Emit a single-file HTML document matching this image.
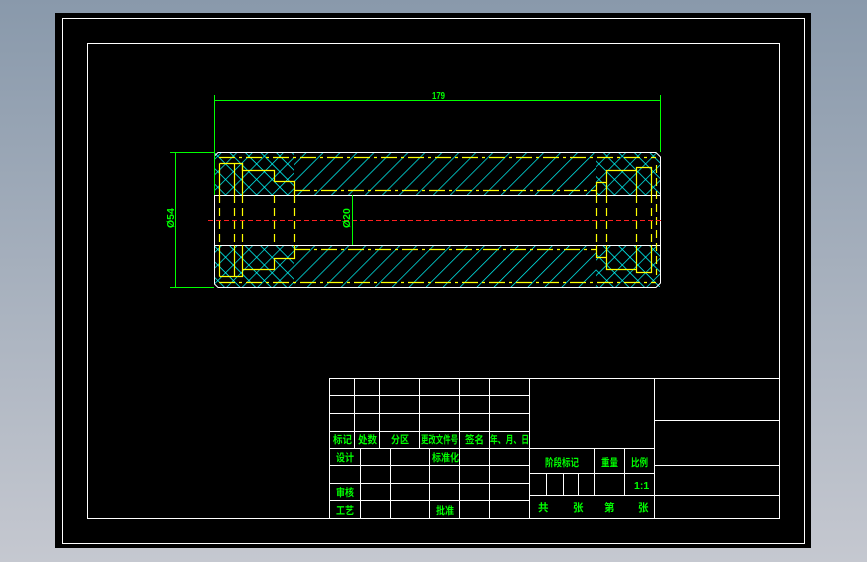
<!DOCTYPE html>
<html><head><meta charset="utf-8"><style>
html,body{margin:0;padding:0}
body{width:867px;height:562px;overflow:hidden;background:linear-gradient(#8999ab,#c5c8d0);font-family:"Liberation Sans","Noto Sans CJK SC",sans-serif}
svg{position:absolute;left:0;top:0}
text{fill:#00ff00;font-family:"Liberation Sans","Noto Sans CJK SC",sans-serif;font-size:10.5px;font-weight:bold}
</style></head><body>
<svg width="867" height="562" viewBox="0 0 867 562">
<defs>
<pattern id="d" width="12" height="12" patternUnits="userSpaceOnUse" patternTransform="rotate(45)"><line x1="0" y1="0" x2="0" y2="12" stroke="#00ffff" stroke-width="1.4"/></pattern>
<pattern id="c" width="11" height="11" patternUnits="userSpaceOnUse" patternTransform="rotate(45)"><path d="M0 0V11M0 0H11" stroke="#00ffff" stroke-width="1.4" fill="none"/></pattern>
</defs>
<rect x="55" y="13" width="756" height="535" fill="#000"/>
<rect x="62.5" y="18.5" width="742" height="525" fill="none" stroke="#fff"/>
<rect x="87.5" y="43.5" width="692" height="475" fill="none" stroke="#fff"/>
<rect x="294" y="153" width="302" height="42" fill="url(#d)"/>
<rect x="294" y="245" width="302" height="42" fill="url(#d)"/>
<rect x="215" y="153" width="79" height="42" fill="url(#c)"/>
<rect x="215" y="245" width="79" height="42" fill="url(#c)"/>
<rect x="596" y="153" width="64" height="42" fill="url(#c)"/>
<rect x="596" y="245" width="64" height="42" fill="url(#c)"/>
<path d="M218 152.5H656L660.5 157V283L656 287.5H218L214.5 284V156Z" fill="none" stroke="#fff"/>
<path d="M214.5 195.5H660.5M214.5 245.5H660.5" stroke="#fff"/>
<g stroke="#ffff00" fill="none" stroke-width="1.2">
<path d="M219.5 163.5H242.5V170.5H274.5V181.5H294.5V195M219.5 163.5V195M234.5 163.5V195"/>
<path d="M219.5 276.5H242.5V269.5H274.5V258.5H294.5V245M219.5 276.5V245M234.5 276.5V245M242.5 163.5V195M242.5 245V276.5"/>
<path d="M294 190.5H596M294 249.5H596M219 157.5H656M219 282.5H656" stroke-dasharray="16 4 3 4"/>
<path d="M219.5 195V245M234.5 195V245M242.5 195V245M274.5 195V245M294.5 195V245M596.5 195V245M606.5 195V245M636.5 195V245M651.5 195V245M656.5 165V275" stroke-dasharray="8 5"/>
<path d="M596.5 195V182.5H606.5V170.5H636.5V167.5H651.5V195M606.5 170.5V195M636.5 167.5V195"/>
<path d="M596.5 245V257.5H606.5V269.5H636.5V272.5H651.5V245M606.5 269.5V245M636.5 272.5V245"/>
</g>
<line x1="208" y1="220.5" x2="664" y2="220.5" stroke="#ff2020" stroke-dasharray="5 3"/>
<g stroke="#00ff00" fill="none">
<path d="M214.5 95V195M660.5 95V152M214.5 100.5H660.5"/>
<path d="M170 152.5H214M170 287.5H214M175.5 152V287"/>
<path d="M352.5 195V245"/>
</g>
<text x="432" y="99" font-size="9" textLength="13" lengthAdjust="spacingAndGlyphs">179</text>
<text transform="translate(174,228) rotate(-90)" font-size="9">Ø54</text>
<text transform="translate(350,228) rotate(-90)" font-size="9">Ø20</text>
<g stroke="#fff" fill="none">
<rect x="329.5" y="378.5" width="450" height="140"/>
<path d="M329 395.5H529M329 413.5H529M329 431.5H529M329 448.5H654M329 465.5H529M329 483.5H529M329 500.5H529"/>
<path d="M354.5 378V448M379.5 378V448M419.5 378V448M459.5 378V518M489.5 378V518M529.5 378V518"/>
<path d="M360.5 448V518M390.5 448V518M429.5 448V518"/>
<path d="M654.5 378V518M529 473.5H654M529 495.5H779M594.5 448V495M624.5 448V495M546.5 473V495M563.5 473V495M578.5 473V495"/>
<path d="M654 420.5H779M654 465.5H779"/>
</g>
<g>
<text x="333" y="443" textLength="19" lengthAdjust="spacingAndGlyphs">标记</text><text x="358" y="443" textLength="19" lengthAdjust="spacingAndGlyphs">处数</text><text x="391" y="443" textLength="18" lengthAdjust="spacingAndGlyphs">分区</text>
<text x="421" y="443" textLength="37" lengthAdjust="spacingAndGlyphs">更改文件号</text><text x="465" y="443" textLength="19" lengthAdjust="spacingAndGlyphs">签名</text><text x="490" y="443" textLength="39" lengthAdjust="spacingAndGlyphs">年、月、日</text>
<text x="336" y="461" textLength="18" lengthAdjust="spacingAndGlyphs">设计</text><text x="432" y="461" textLength="27" lengthAdjust="spacingAndGlyphs">标准化</text>
<text x="336" y="496" textLength="18" lengthAdjust="spacingAndGlyphs">审核</text><text x="336" y="514" textLength="18" lengthAdjust="spacingAndGlyphs">工艺</text><text x="436" y="514" textLength="18" lengthAdjust="spacingAndGlyphs">批准</text>
<text x="545" y="466" textLength="34" lengthAdjust="spacingAndGlyphs">阶段标记</text><text x="601" y="466" textLength="17" lengthAdjust="spacingAndGlyphs">重量</text><text x="631" y="466" textLength="17" lengthAdjust="spacingAndGlyphs">比例</text>
<text x="634" y="489" font-weight="normal">1:1</text>
<text x="538" y="511">共</text><text x="573" y="511">张</text><text x="604" y="511">第</text><text x="638" y="511">张</text>
</g>
</svg>
</body></html>
